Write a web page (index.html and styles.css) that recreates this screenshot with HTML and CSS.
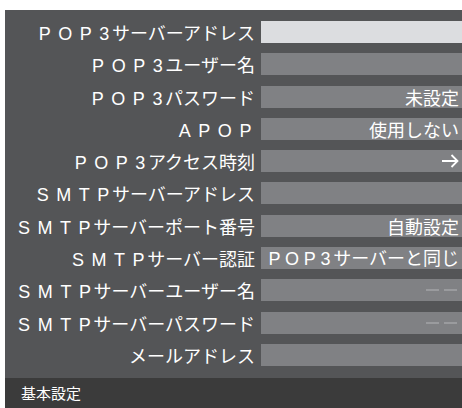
FILE: index.html
```html
<!DOCTYPE html>
<html lang="ja">
<head>
    <meta charset="UTF-8">
    <meta name="viewport" content="width=device-width, initial-scale=1.0">
    <title>メール設定</title>
    <link rel="stylesheet" href="styles.css">
</head>
<body>
    <div class="screen">
        <div class="panel">
            <div class="label"><span class="en">POP3</span>サーバーアドレス</div>
            <div class="value selected"></div>

            <div class="label"><span class="en">POP3</span>ユーザー名</div>
            <div class="value"></div>

            <div class="label"><span class="en">POP3</span>パスワード</div>
            <div class="value"><span>未設定</span></div>

            <div class="label"><span class="en last">APOP</span></div>
            <div class="value"><span>使用しない</span></div>

            <div class="label"><span class="en">POP3</span>アクセス時刻</div>
            <div class="value">
                <svg class="arrow" width="18" height="14" viewBox="0 0 18 14">
                    <path d="M1 7 H16.5 M10.5 1 L16.5 7 L10.5 13" fill="none" stroke="#ffffff" stroke-width="1.8"/>
                </svg>
            </div>

            <div class="label"><span class="en">SMTP</span>サーバーアドレス</div>
            <div class="value"></div>

            <div class="label"><span class="en">SMTP</span>サーバーポート番号</div>
            <div class="value"><span>自動設定</span></div>

            <div class="label"><span class="en">SMTP</span>サーバー認証</div>
            <div class="value"><span><span class="en">POP3</span>サーバーと同じ</span></div>

            <div class="label"><span class="en">SMTP</span>サーバーユーザー名</div>
            <div class="value"><span class="dash"></span><span class="dash"></span></div>

            <div class="label"><span class="en">SMTP</span>サーバーパスワード</div>
            <div class="value"><span class="dash"></span><span class="dash"></span></div>

            <div class="label">メールアドレス</div>
            <div class="value"></div>
        </div>
        <div class="footer">基本設定</div>
    </div>
</body>
</html>
```

FILE: styles.css
```css
* {
    margin: 0;
    padding: 0;
    box-sizing: border-box;
}
body {
    background: #ffffff;
    font-family: "Noto Sans CJK JP", "Noto Sans", sans-serif;
    color: #ffffff;
    overflow: hidden;
}
.screen {
    padding: 10px 0 0 5px;
    width: 462px;
    height: 408px;
}
.panel {
    background: #545557;
    display: grid;
    grid-template-columns: 250px 1fr;
    column-gap: 6px;
    row-gap: 10.3px;
    padding: 11px 0 11.7px;
}
.label {
    height: 22px;
    line-height: 22px;
    font-size: 18px;
    text-align: right;
    white-space: nowrap;
}
.en {
    font-family: "Liberation Sans", Arial, sans-serif;
    letter-spacing: 0.42em;
    margin-right: -5px;
}
.en.last {
    margin-right: -4px;
}
.value {
    height: 22px;
    line-height: 22px;
    font-size: 18px;
    background: #808184;
    padding-right: 3px;
    white-space: nowrap;
    display: flex;
    justify-content: flex-end;
    align-items: center;
    gap: 5px;
}
.value .en {
    letter-spacing: 0.26em;
    margin-right: -2px;
}
.selected {
    background: #dcdde0;
}
.dash {
    width: 13px;
    height: 2px;
    background: #9a9b9e;
}
.dash:last-child {
    margin-right: 2px;
}
.footer {
    background: #3b3b3b;
    height: 30px;
    line-height: 30px;
    font-size: 15px;
    padding-left: 16px;
}
```
